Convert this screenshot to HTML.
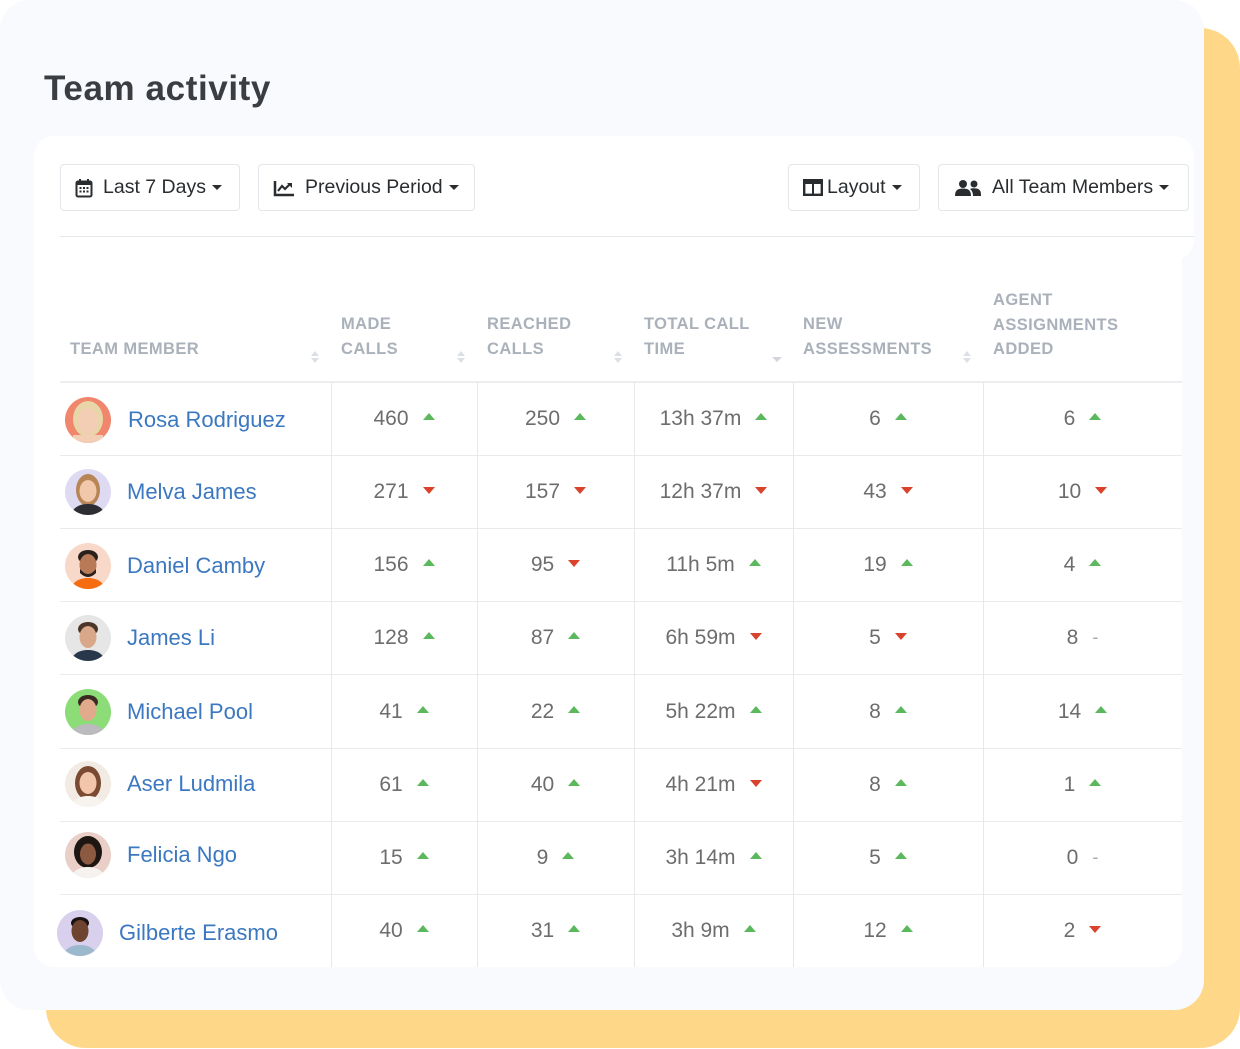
<!DOCTYPE html>
<html><head><meta charset="utf-8"><style>
*{margin:0;padding:0;box-sizing:border-box}
body{width:1240px;height:1049px;background:#fff;position:relative;overflow:hidden;font-family:"Liberation Sans",sans-serif}
.abs{position:absolute}
.yellow{left:46px;top:28px;width:1194px;height:1020px;background:#fed888;border-radius:40px}
.main{left:0;top:0;width:1204px;height:1010px;background:#f8fafd;border-radius:30px}
.card{left:34px;top:136px;width:1148px;height:831px;background:#fff;border-radius:20px}
.cardtop{left:34px;top:136px;width:1160px;height:124px;background:#fff;border-radius:20px 20px 20px 0}
h1{position:absolute;left:44px;top:69px;font-size:35px;font-weight:bold;color:#3a3e42;letter-spacing:0.6px}
.btn{position:absolute;top:164px;height:47px;border:1px solid #e3e6ea;border-radius:4px;background:#fff;display:flex;align-items:center;font-size:19.5px;color:#2a2d30;padding-left:14px}
.btn svg{margin-right:10px}
.caret{display:inline-block;width:0;height:0;border-left:5px solid transparent;border-right:5px solid transparent;border-top:5px solid #2a2d30;margin-left:6px}
.sep{left:60px;top:236px;width:1134px;height:1px;background:#e6e8eb}
.hd{position:absolute;font-size:16.5px;font-weight:bold;color:#aab1ba;line-height:24.5px;letter-spacing:0.4px}
.sort{position:absolute}
.hline{position:absolute;left:60px;width:1122px;height:2px;background:#eceef0}
.rline{position:absolute;left:60px;width:1122px;height:1px;background:#e8eaec}
.vline{position:absolute;top:382px;height:585px;width:1px;background:#e6e8ea}
.cell{position:absolute;height:73px;display:flex;align-items:center;justify-content:center;font-size:21px;color:#6d6d6d}
.up{display:inline-block;width:0;height:0;border-left:6px solid transparent;border-right:6px solid transparent;border-bottom:7px solid #5cb85c;margin-left:14px;margin-top:-4px}
.dn{display:inline-block;width:0;height:0;border-left:6px solid transparent;border-right:6px solid transparent;border-top:7px solid #d9432c;margin-left:14px;margin-top:-2px}
.dash{display:inline-block;margin-left:14px;font-size:18px;color:#aaa}
.name{position:absolute;height:73px;display:flex;align-items:center;font-size:22px;color:#3b78c1}
.av{width:46px;height:46px;border-radius:50%;overflow:hidden;margin-right:16px;flex:none}
</style></head><body>
<div class="abs yellow"></div>
<div class="abs main"></div>
<h1>Team activity</h1>
<div class="abs cardtop"></div>
<div class="abs card"></div>

<div class="btn" style="left:60px;width:180px">
<svg width="18" height="20" viewBox="0 0 18 20"><rect x="1.5" y="3.5" width="15" height="15" rx="1.5" fill="none" stroke="#2a2d30" stroke-width="2"/><rect x="1.5" y="3.5" width="15" height="3.5" fill="#2a2d30"/><rect x="4" y="1" width="2" height="4" fill="#2a2d30"/><rect x="12" y="1" width="2" height="4" fill="#2a2d30"/><g fill="#2a2d30"><rect x="4.5" y="9" width="2" height="2"/><rect x="8" y="9" width="2" height="2"/><rect x="11.5" y="9" width="2" height="2"/><rect x="4.5" y="12.5" width="2" height="2"/><rect x="8" y="12.5" width="2" height="2"/><rect x="11.5" y="12.5" width="2" height="2"/></g></svg>Last 7 Days<span class="caret"></span></div>
<div class="btn" style="left:258px;width:217px">
<svg width="22" height="18" viewBox="0 0 22 18"><path d="M2 2V16H21" fill="none" stroke="#2a2d30" stroke-width="2.5"/><path d="M5 12L9 7L12 10L17 5" fill="none" stroke="#2a2d30" stroke-width="2.2"/><path d="M14 4H19V9Z" fill="#2a2d30"/></svg>Previous Period<span class="caret"></span></div>
<div class="btn" style="left:788px;width:132px">
<svg width="20" height="17" viewBox="0 0 20 17" style="margin-right:4px"><rect x="1.2" y="1.2" width="17.6" height="14.6" fill="none" stroke="#2a2d30" stroke-width="2.4"/><rect x="1" y="1" width="18" height="4" fill="#2a2d30"/><rect x="9" y="1" width="2" height="15" fill="#2a2d30"/></svg>Layout<span class="caret"></span></div>
<div class="btn" style="left:938px;width:251px;padding-left:16px">
<svg width="26" height="18" viewBox="0 0 26 18" style="margin-right:11px"><circle cx="8" cy="5" r="4" fill="#2a2d30"/><circle cx="19" cy="5" r="3.5" fill="#2a2d30"/><path d="M0 17C0 11 3 9.5 8 9.5S16 11 16 17Z" fill="#2a2d30"/><path d="M15 10C17 9 22 9 24 10.5S26 14 26 17H18C18 14 17 11.5 15 10Z" fill="#2a2d30"/></svg>All Team Members<span class="caret"></span></div>
<div class="abs sep"></div>

<div class="hd" style="left:70px;top:337px">TEAM MEMBER</div>
<div class="hd" style="left:341px;top:312px">MADE<br>CALLS</div>
<div class="hd" style="left:487px;top:312px">REACHED<br>CALLS</div>
<div class="hd" style="left:644px;top:312px">TOTAL CALL<br>TIME</div>
<div class="hd" style="left:803px;top:312px">NEW<br>ASSESSMENTS</div>
<div class="hd" style="left:993px;top:288px">AGENT<br>ASSIGNMENTS<br>ADDED</div>
<svg class="sort" style="left:310px;top:350px" width="10" height="14"><path d="M1 6L5 1L9 6Z M1 8L5 13L9 8Z" fill="#dcdfe3"/></svg>
<svg class="sort" style="left:456px;top:350px" width="10" height="14"><path d="M1 6L5 1L9 6Z M1 8L5 13L9 8Z" fill="#dcdfe3"/></svg>
<svg class="sort" style="left:613px;top:350px" width="10" height="14"><path d="M1 6L5 1L9 6Z M1 8L5 13L9 8Z" fill="#dcdfe3"/></svg>
<svg class="sort" style="left:772px;top:350px" width="10" height="14"><path d="M0 7L5 12L10 7Z" fill="#d2d5da"/></svg>
<svg class="sort" style="left:962px;top:350px" width="10" height="14"><path d="M1 6L5 1L9 6Z M1 8L5 13L9 8Z" fill="#dcdfe3"/></svg>

<div class="hline" style="top:381px"></div>
<div class="rline" style="top:455px"></div>
<div class="rline" style="top:528px"></div>
<div class="rline" style="top:601px"></div>
<div class="rline" style="top:674px"></div>
<div class="rline" style="top:748px"></div>
<div class="rline" style="top:821px"></div>
<div class="rline" style="top:894px"></div>
<div class="vline" style="left:331px"></div>
<div class="vline" style="left:477px"></div>
<div class="vline" style="left:634px"></div>
<div class="vline" style="left:793px"></div>
<div class="vline" style="left:983px"></div>

<div class="name" style="left:65px;top:383px"><div class="av" style="margin-right:17px"><svg width="46" height="46"><rect width="46" height="46" fill="#f0866c"/><ellipse cx="23" cy="22" rx="15" ry="18" fill="#e8d6a8"/><ellipse cx="23" cy="24" rx="10" ry="13" fill="#f3cdb4"/><rect x="8" y="38" width="30" height="10" fill="#f3cdb4"/></svg></div>Rosa Rodriguez</div>
<div class="name" style="left:65px;top:455px"><div class="av"><svg width="46" height="46"><rect width="46" height="46" fill="#dedaf2"/><ellipse cx="23" cy="21" rx="12" ry="16" fill="#b88556"/><ellipse cx="23" cy="22" rx="8.5" ry="11" fill="#f1c8aa"/><path d="M6 46C8 38 15 35 23 35S38 38 40 46Z" fill="#2d2d33"/></svg></div>Melva James</div>
<div class="name" style="left:65px;top:529px"><div class="av"><svg width="46" height="46"><rect width="46" height="46" fill="#f8d8c8"/><ellipse cx="23" cy="14" rx="10" ry="7" fill="#2b211c"/><ellipse cx="23" cy="22" rx="8.5" ry="11" fill="#b97b57"/><path d="M15 26Q23 36 31 26V30Q23 38 15 30Z" fill="#2b211c"/><path d="M6 46C8 38 15 35 23 35S38 38 40 46Z" fill="#f56d10"/></svg></div>Daniel Camby</div>
<div class="name" style="left:65px;top:601px"><div class="av"><svg width="46" height="46"><rect width="46" height="46" fill="#e6e6e6"/><ellipse cx="23" cy="14" rx="10" ry="7" fill="#4a3528"/><ellipse cx="23" cy="22" rx="8.5" ry="11" fill="#d9a88a"/><path d="M6 46C8 38 15 35 23 35S38 38 40 46Z" fill="#28374a"/></svg></div>James Li</div>
<div class="name" style="left:65px;top:675px"><div class="av"><svg width="46" height="46"><rect width="46" height="46" fill="#8cdc78"/><ellipse cx="23" cy="13" rx="10" ry="7" fill="#3a2a22"/><ellipse cx="23" cy="21" rx="8.5" ry="11" fill="#e1aa8c"/><path d="M6 46C8 38 15 35 23 35S38 38 40 46Z" fill="#bbbbbf"/></svg></div>Michael Pool</div>
<div class="name" style="left:65px;top:747px"><div class="av"><svg width="46" height="46"><rect width="46" height="46" fill="#f2ebe4"/><ellipse cx="23" cy="22" rx="13" ry="17" fill="#7a4a32"/><ellipse cx="23" cy="22" rx="8.5" ry="11" fill="#f1c6aa"/><path d="M6 46C8 38 15 35 23 35S38 38 40 46Z" fill="#f7f4f0"/></svg></div>Aser Ludmila</div>
<div class="name" style="left:65px;top:818px"><div class="av"><svg width="46" height="46"><rect width="46" height="46" fill="#e9cfc7"/><ellipse cx="23" cy="20" rx="14" ry="16" fill="#1e1612"/><ellipse cx="23" cy="22" rx="8" ry="10.5" fill="#8c5a40"/><path d="M6 46C8 38 15 35 23 35S38 38 40 46Z" fill="#f5f2ef"/></svg></div>Felicia Ngo</div>
<div class="name" style="left:57px;top:896px"><div class="av"><svg width="46" height="46"><rect width="46" height="46" fill="#d8d0ec"/><ellipse cx="23" cy="13" rx="9" ry="6" fill="#1a1210"/><ellipse cx="23" cy="21" rx="8.5" ry="11" fill="#6e4330"/><path d="M6 46C8 38 15 35 23 35S38 38 40 46Z" fill="#9bb8cc"/></svg></div>Gilberte Erasmo</div>

<div class="cell" style="left:331px;width:146px;top:382px">460<i class="up"></i></div>
<div class="cell" style="left:331px;width:146px;top:455px">271<i class="dn"></i></div>
<div class="cell" style="left:331px;width:146px;top:528px">156<i class="up"></i></div>
<div class="cell" style="left:331px;width:146px;top:601px">128<i class="up"></i></div>
<div class="cell" style="left:331px;width:146px;top:675px">41<i class="up"></i></div>
<div class="cell" style="left:331px;width:146px;top:748px">61<i class="up"></i></div>
<div class="cell" style="left:331px;width:146px;top:821px">15<i class="up"></i></div>
<div class="cell" style="left:331px;width:146px;top:894px">40<i class="up"></i></div>
<div class="cell" style="left:477px;width:157px;top:382px">250<i class="up"></i></div>
<div class="cell" style="left:477px;width:157px;top:455px">157<i class="dn"></i></div>
<div class="cell" style="left:477px;width:157px;top:528px">95<i class="dn"></i></div>
<div class="cell" style="left:477px;width:157px;top:601px">87<i class="up"></i></div>
<div class="cell" style="left:477px;width:157px;top:675px">22<i class="up"></i></div>
<div class="cell" style="left:477px;width:157px;top:748px">40<i class="up"></i></div>
<div class="cell" style="left:477px;width:157px;top:821px">9<i class="up"></i></div>
<div class="cell" style="left:477px;width:157px;top:894px">31<i class="up"></i></div>
<div class="cell" style="left:634px;width:159px;top:382px">13h 37m<i class="up"></i></div>
<div class="cell" style="left:634px;width:159px;top:455px">12h 37m<i class="dn"></i></div>
<div class="cell" style="left:634px;width:159px;top:528px">11h 5m<i class="up"></i></div>
<div class="cell" style="left:634px;width:159px;top:601px">6h 59m<i class="dn"></i></div>
<div class="cell" style="left:634px;width:159px;top:675px">5h 22m<i class="up"></i></div>
<div class="cell" style="left:634px;width:159px;top:748px">4h 21m<i class="dn"></i></div>
<div class="cell" style="left:634px;width:159px;top:821px">3h 14m<i class="up"></i></div>
<div class="cell" style="left:634px;width:159px;top:894px">3h 9m<i class="up"></i></div>
<div class="cell" style="left:793px;width:190px;top:382px">6<i class="up"></i></div>
<div class="cell" style="left:793px;width:190px;top:455px">43<i class="dn"></i></div>
<div class="cell" style="left:793px;width:190px;top:528px">19<i class="up"></i></div>
<div class="cell" style="left:793px;width:190px;top:601px">5<i class="dn"></i></div>
<div class="cell" style="left:793px;width:190px;top:675px">8<i class="up"></i></div>
<div class="cell" style="left:793px;width:190px;top:748px">8<i class="up"></i></div>
<div class="cell" style="left:793px;width:190px;top:821px">5<i class="up"></i></div>
<div class="cell" style="left:793px;width:190px;top:894px">12<i class="up"></i></div>
<div class="cell" style="left:983px;width:199px;top:382px">6<i class="up"></i></div>
<div class="cell" style="left:983px;width:199px;top:455px">10<i class="dn"></i></div>
<div class="cell" style="left:983px;width:199px;top:528px">4<i class="up"></i></div>
<div class="cell" style="left:983px;width:199px;top:601px">8<span class="dash">-</span></div>
<div class="cell" style="left:983px;width:199px;top:675px">14<i class="up"></i></div>
<div class="cell" style="left:983px;width:199px;top:748px">1<i class="up"></i></div>
<div class="cell" style="left:983px;width:199px;top:821px">0<span class="dash">-</span></div>
<div class="cell" style="left:983px;width:199px;top:894px">2<i class="dn"></i></div>
</body></html>
